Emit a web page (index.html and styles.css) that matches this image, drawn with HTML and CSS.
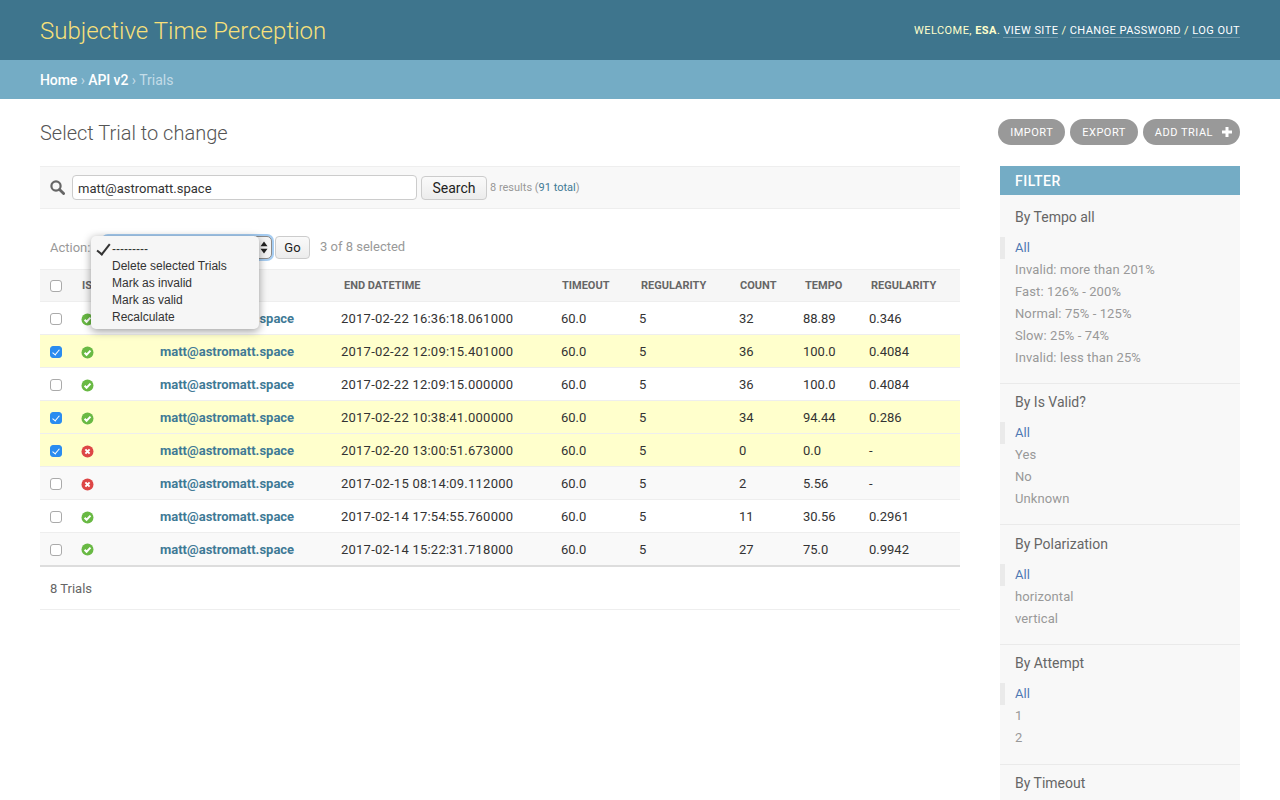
FILE: index.html
```html
<!DOCTYPE html>
<html lang="en">
<head>
  <meta charset="UTF-8" />
  <title>Select Trial to change</title>
  <link rel="stylesheet" href="styles.css">
</head>
<body>
  <svg class="sprites" width="0" height="0">
    <symbol id="icon-yes" viewBox="0 0 13 13">
      <circle cx="6.5" cy="6.5" r="6" fill="#69b944"/>
      <path d="M3.6 6.7 5.6 8.7 9.5 4.6" fill="none" stroke="#fff" stroke-width="2"/>
    </symbol>
    <symbol id="icon-no" viewBox="0 0 13 13">
      <circle cx="6.5" cy="6.5" r="6" fill="#dd4646"/>
      <path d="M4.4 4.4 8.6 8.6M8.6 4.4 4.4 8.6" fill="none" stroke="#fff" stroke-width="2"/>
    </symbol>
  </svg>

  <div class="page">
    <header class="topbar">
      <div class="branding">Subjective Time Perception</div>
      <div class="usertools">
        Welcome, <strong>Esa</strong>.
        <a href="#">View site</a> /
        <a href="#">Change password</a> /
        <a href="#">Log out</a>
      </div>
    </header>

    <div class="breadcrumbs">
      <a href="#">Home</a> › <a href="#">API v2</a> › Trials
    </div>

    <main class="content">
      <div class="title-row">
        <h1>Select Trial to change</h1>
        <ul class="object-tools">
          <li><a href="#">Import</a></li>
          <li><a href="#">Export</a></li>
          <li><a href="#" class="addlink">Add Trial
            <svg class="plus" viewBox="0 0 10 10" width="10" height="10"><path d="M5 0v10M0 5h10" stroke="#fff" stroke-width="3"/></svg>
          </a></li>
        </ul>
      </div>

      <div class="columns">
        <div class="changelist">
          <!-- search -->
          <div class="toolbar">
            <svg class="search-icon" viewBox="0 0 15 15" width="15" height="15">
              <circle cx="6" cy="6" r="4.6" fill="none" stroke="#666" stroke-width="2.2"/>
              <path d="M9.5 9.5 13.6 13.6" stroke="#666" stroke-width="2.8" stroke-linecap="round"/>
            </svg>
            <input class="search-input" type="text" value="matt@astromatt.space" />
            <button class="btn search-btn" type="button">Search</button>
            <span class="small-note">8 results (<a href="#">91 total</a>)</span>
          </div>

          <!-- actions -->
          <div class="actions">
            <span class="action-label">Action:</span>
            <div class="fake-select">
              <svg viewBox="0 0 8 13" width="8" height="13"><path d="M4 0.5 7.5 5.2H.5ZM4 12.5 .5 7.8H7.5Z" fill="#222"/></svg>
            </div>
            <button class="btn go-btn" type="button">Go</button>
            <span class="action-counter">3 of 8 selected</span>

            <ul class="select-menu">
              <li class="checked">---------</li>
              <li>Delete selected Trials</li>
              <li>Mark as invalid</li>
              <li>Mark as valid</li>
              <li>Recalculate</li>
            </ul>
          </div>

          <table class="results">
            <colgroup>
              <col class="c-check"><col class="c-valid"><col class="c-user"><col class="c-date">
              <col class="c-timeout"><col class="c-reg"><col class="c-count"><col class="c-tempo"><col class="c-reg2">
            </colgroup>
            <thead>
              <tr>
                <th><input type="checkbox" /></th>
                <th class="th-tight">Is</th>
                <th></th>
                <th class="th-wide">End datetime</th>
                <th class="th-tight">Timeout</th>
                <th>Regularity</th>
                <th class="th-tight">Count</th>
                <th>Tempo</th>
                <th>Regularity</th>
              </tr>
            </thead>
            <tbody>
              <tr>
                <td><input type="checkbox" /></td>
                <td><svg class="status"><use href="#icon-yes"/></svg></td>
                <td class="user"><a href="#">matt@astromatt.space</a></td>
                <td class="date">2017-02-22 16:36:18.061000</td><td>60.0</td><td>5</td><td>32</td><td>88.89</td><td>0.346</td>
              </tr>
              <tr class="selected">
                <td><input type="checkbox" checked /></td>
                <td><svg class="status"><use href="#icon-yes"/></svg></td>
                <td><a href="#">matt@astromatt.space</a></td>
                <td class="date">2017-02-22 12:09:15.401000</td><td>60.0</td><td>5</td><td>36</td><td>100.0</td><td>0.4084</td>
              </tr>
              <tr>
                <td><input type="checkbox" /></td>
                <td><svg class="status"><use href="#icon-yes"/></svg></td>
                <td><a href="#">matt@astromatt.space</a></td>
                <td class="date">2017-02-22 12:09:15.000000</td><td>60.0</td><td>5</td><td>36</td><td>100.0</td><td>0.4084</td>
              </tr>
              <tr class="selected">
                <td><input type="checkbox" checked /></td>
                <td><svg class="status"><use href="#icon-yes"/></svg></td>
                <td><a href="#">matt@astromatt.space</a></td>
                <td class="date">2017-02-22 10:38:41.000000</td><td>60.0</td><td>5</td><td>34</td><td>94.44</td><td>0.286</td>
              </tr>
              <tr class="selected">
                <td><input type="checkbox" checked /></td>
                <td><svg class="status"><use href="#icon-no"/></svg></td>
                <td><a href="#">matt@astromatt.space</a></td>
                <td class="date">2017-02-20 13:00:51.673000</td><td>60.0</td><td>5</td><td>0</td><td>0.0</td><td>-</td>
              </tr>
              <tr class="alt">
                <td><input type="checkbox" /></td>
                <td><svg class="status"><use href="#icon-no"/></svg></td>
                <td><a href="#">matt@astromatt.space</a></td>
                <td class="date">2017-02-15 08:14:09.112000</td><td>60.0</td><td>5</td><td>2</td><td>5.56</td><td>-</td>
              </tr>
              <tr>
                <td><input type="checkbox" /></td>
                <td><svg class="status"><use href="#icon-yes"/></svg></td>
                <td><a href="#">matt@astromatt.space</a></td>
                <td class="date">2017-02-14 17:54:55.760000</td><td>60.0</td><td>5</td><td>11</td><td>30.56</td><td>0.2961</td>
              </tr>
              <tr class="alt">
                <td><input type="checkbox" /></td>
                <td><svg class="status"><use href="#icon-yes"/></svg></td>
                <td><a href="#">matt@astromatt.space</a></td>
                <td class="date">2017-02-14 15:22:31.718000</td><td>60.0</td><td>5</td><td>27</td><td>75.0</td><td>0.9942</td>
              </tr>
            </tbody>
          </table>

          <p class="paginator">8 Trials</p>
        </div>

        <!-- filtry -->
        <aside class="filter">
          <h2>Filter</h2>
          <section>
            <h3>By Tempo all</h3>
            <ul>
              <li class="selected"><a href="#">All</a></li>
              <li><a href="#">Invalid: more than 201%</a></li>
              <li><a href="#">Fast: 126% - 200%</a></li>
              <li><a href="#">Normal: 75% - 125%</a></li>
              <li><a href="#">Slow: 25% - 74%</a></li>
              <li><a href="#">Invalid: less than 25%</a></li>
            </ul>
          </section>
          <section>
            <h3>By Is Valid?</h3>
            <ul>
              <li class="selected"><a href="#">All</a></li>
              <li><a href="#">Yes</a></li>
              <li><a href="#">No</a></li>
              <li><a href="#">Unknown</a></li>
            </ul>
          </section>
          <section class="shifted">
            <h3>By Polarization</h3>
            <ul>
              <li class="selected"><a href="#">All</a></li>
              <li><a href="#">horizontal</a></li>
              <li><a href="#">vertical</a></li>
            </ul>
          </section>
          <section class="tall">
            <h3>By Attempt</h3>
            <ul>
              <li class="selected"><a href="#">All</a></li>
              <li><a href="#">1</a></li>
              <li><a href="#">2</a></li>
            </ul>
          </section>
          <section>
            <h3>By Timeout</h3>
          </section>
        </aside>
      </div>
    </main>
  </div>
</body>
</html>
```

FILE: styles.css
```css
:root {
  --header: #3e758d;
  --crumbs: #74acc5;
  --link: #3f7a96;
  --muted: #999;
  --line: #eee;
}

* {
  box-sizing: border-box;
  margin: 0;
  padding: 0;
}

html, body {
  height: 100%;
  overflow: hidden;
}

body {
  font-family: Roboto, "Liberation Sans", sans-serif;
  font-size: 13px;
  color: #333;
  background: #fff;
}

a {
  color: var(--link);
  text-decoration: none;
}

ul {
  list-style: none;
}

.sprites {
  position: absolute;
}

.page {
  height: 800px;
  overflow: hidden;
}

.topbar {
  height: 60px;
  padding: 0 40px;
  display: flex;
  justify-content: space-between;
  align-items: center;
  background: var(--header);
}

.branding {
  padding-top: 1px;
  font-size: 24px;
  font-weight: 300;
  letter-spacing: 0.04px;
  color: #f8e07a;
}

.usertools {
  font-size: 11px;
  font-weight: 400;
  letter-spacing: 0.45px;
  text-transform: uppercase;
  color: #ffc;
}

.usertools strong {
  font-weight: 700;
}

.usertools a {
  color: #fff;
  border-bottom: 1px solid rgba(255, 255, 255, 0.25);
}

.breadcrumbs {
  height: 39px;
  padding: 0 40px;
  line-height: 41px;
  font-size: 14px;
  font-weight: 400;
  color: #c4dce8;
  background: var(--crumbs);
}

.breadcrumbs a {
  color: #fff;
  font-weight: 500;
  letter-spacing: -0.1px;
}

.content {
  padding: 20px 40px 0;
}

.title-row {
  height: 47px;
  display: flex;
  justify-content: space-between;
}

h1 {
  font-size: 20px;
  font-weight: 300;
  line-height: 28px;
  color: #555;
}

.object-tools {
  display: flex;
  gap: 5px;
  height: 26px;
}

.object-tools a {
  display: flex;
  align-items: center;
  height: 26px;
  padding: 0 12px;
  border-radius: 13px;
  background: #999;
  color: #fff;
  font-size: 11px;
  letter-spacing: 0.5px;
  text-transform: uppercase;
}

.object-tools .addlink {
  padding-right: 8px;
}

.plus {
  margin-left: 9px;
}

.columns {
  display: flex;
  justify-content: space-between;
  align-items: flex-start;
}

.changelist {
  width: 920px;
}

.toolbar {
  height: 43px;
  padding: 0 10px;
  display: flex;
  align-items: center;
  background: #f8f8f8;
  border-top: 1px solid var(--line);
  border-bottom: 1px solid var(--line);
}

.search-icon {
  margin-right: 7px;
}

.search-input {
  width: 345px;
  height: 25px;
  padding: 1px 5px 0;
  border: 1px solid #ccc;
  border-radius: 4px;
  font: 13px Roboto, sans-serif;
  color: #333;
  background: #fff;
}

.btn {
  border: 1px solid #ccc;
  border-radius: 4px;
  background: linear-gradient(#fafafa, #ececec);
  color: #222;
  font-family: Roboto, sans-serif;
}

.search-btn {
  width: 66px;
  height: 24px;
  margin-left: 4px;
  font-size: 14px;
}

.small-note {
  margin-left: 3px;
  font-size: 11px;
  color: var(--muted);
}

.actions {
  position: relative;
  height: 60px;
  padding: 27px 10px 0;
  display: flex;
  align-items: flex-start;
}

.action-label {
  width: 53px;
  line-height: 23px;
  color: var(--muted);
}

.fake-select {
  width: 169px;
  height: 23px;
  display: flex;
  justify-content: flex-end;
  align-items: center;
  padding-right: 3px;
  border: 1px solid #8a8a8a;
  border-radius: 5px;
  background: #f4f4f4;
  box-shadow: 0 0 0 2px #a6cdf2;
}

.go-btn {
  width: 35px;
  height: 23px;
  margin-left: 3px;
  font-size: 13px;
}

.action-counter {
  margin-left: 10px;
  line-height: 21px;
  color: var(--muted);
}

/* menu nativo aberto por cima do select */
.select-menu {
  position: absolute;
  left: 51px;
  top: 27px;
  width: 168px;
  height: 93px;
  padding-top: 4px;
  border-radius: 5px;
  background: #f6f6f6;
  box-shadow: 0 2px 8px rgba(0, 0, 0, 0.4);
  font-family: "Liberation Sans", sans-serif;
  font-size: 12px;
  line-height: 17px;
  color: #333;
}

.select-menu li {
  padding-left: 21px;
}

.select-menu .checked {
  position: relative;
  line-height: 18px;
}

.select-menu .checked::before {
  content: "";
  position: absolute;
  left: 9px;
  top: 1px;
  width: 5px;
  height: 12px;
  border-right: 2px solid #333;
  border-bottom: 2px solid #333;
  transform: rotate(38deg);
}

.results {
  width: 100%;
  table-layout: fixed;
  border-collapse: collapse;
}

.c-check { width: 31px; }
.c-valid { width: 79px; }
.c-user { width: 181px; }
.c-date { width: 220px; }
.c-timeout { width: 78px; }
.c-reg { width: 100px; }
.c-count { width: 64px; }
.c-tempo { width: 66px; }
.c-reg2 { width: 101px; }

.results th {
  height: 32px;
  padding: 0 0 0 12px;
  text-align: left;
  font-size: 11px;
  font-weight: 700;
  text-transform: uppercase;
  white-space: nowrap;
  color: #666;
  background: #f6f6f6;
  border-top: 1px solid var(--line);
  border-bottom: 1px solid var(--line);
}

.results th:first-child {
  padding-left: 10px;
}

.results th.th-tight {
  padding-left: 11px;
}

.results th.th-wide {
  padding-left: 13px;
}

.results td {
  height: 33px;
  padding: 0 0 0 10px;
  font-size: 13px;
  color: #333;
  border-bottom: 1px solid var(--line);
}

.results td a {
  font-weight: 700;
}

.results td.date {
  letter-spacing: 0.23px;
}

.results td input,
.results td .status {
  margin-top: 2px;
}

.results tr.alt td {
  background: #f9f9f9;
}

.results tr.selected td {
  background: #ffc;
}

.results tbody tr:last-child td {
  padding-top: 2px;
  border-bottom: 2px solid #ddd;
}

.results tbody tr:last-child td input,
.results tbody tr:last-child td .status {
  margin-top: 0;
}

.status {
  display: block;
  width: 13px;
  height: 13px;
}

input[type="checkbox"] {
  appearance: none;
  position: relative;
  display: block;
  width: 12px;
  height: 12px;
  border: 1px solid #aaa;
  border-radius: 3px;
  background: #fff;
}

input[type="checkbox"]:checked {
  border-color: #2a8cf0;
  background: #2a8cf0;
}

input[type="checkbox"]:checked::after {
  content: "";
  position: absolute;
  left: 3px;
  top: 1px;
  width: 3px;
  height: 6px;
  border-right: 1.5px solid #fff;
  border-bottom: 1.5px solid #fff;
  transform: rotate(40deg);
}

.paginator {
  height: 43px;
  padding: 0 10px;
  line-height: 43px;
  color: #666;
  border-bottom: 1px solid var(--line);
}

.filter {
  width: 240px;
  background: #f8f8f8;
}

.filter h2 {
  height: 29px;
  padding: 0 15px;
  line-height: 31px;
  font-size: 14px;
  font-weight: 500;
  letter-spacing: 0.5px;
  text-transform: uppercase;
  color: #fff;
  background: var(--crumbs);
}

.filter section {
  padding: 10px 0 14px;
  border-bottom: 1px solid #eaeaea;
}

.filter section:first-of-type {
  padding-top: 14px;
}

.filter section.shifted {
  padding-top: 11px;
}

.filter section.tall {
  padding-bottom: 15px;
}

.filter h3 {
  padding: 0 15px;
  margin-bottom: 12px;
  font-size: 14px;
  font-weight: 400;
  line-height: 16px;
  color: #666;
}

.filter li {
  padding-left: 15px;
  line-height: 22px;
  letter-spacing: 0.1px;
}

.filter li a {
  color: var(--muted);
}

.filter li.selected {
  padding-left: 10px;
  border-left: 5px solid #eaeaea;
}

.filter li.selected a {
  color: #4f78b4;
}
```
